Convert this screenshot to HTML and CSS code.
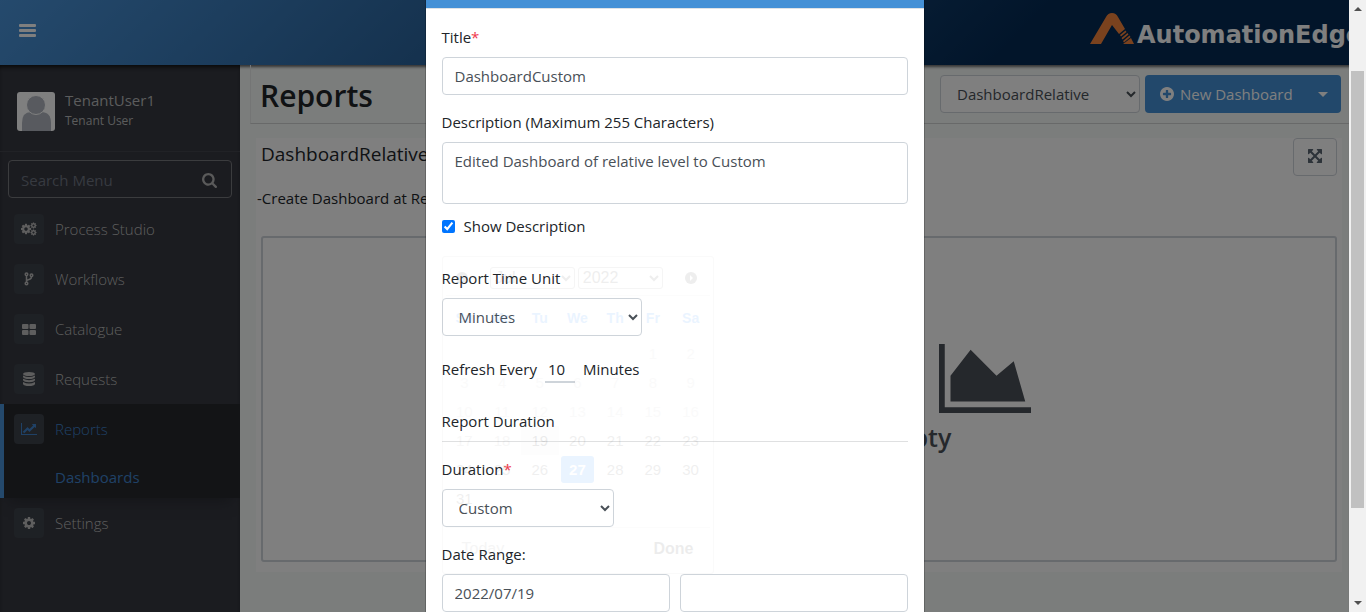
FILE: index.html
```html
<!DOCTYPE html>
<html lang="en">
<head>
<meta charset="utf-8">
<title>Reports - AutomationEdge</title>
<link rel="stylesheet" href="styles.css">
</head>
<body>
<svg width="0" height="0" class="defs" aria-hidden="true">
  <symbol id="cog" viewBox="0 0 1792 1792"><path d="M1152 896q0-106-75-181t-181-75-181 75-75 181 75 181 181 75 181-75 75-181zm512-109v222q0 12-8 23t-20 13l-185 28q-19 54-39 91 35 50 107 138 10 12 10 25t-9 23q-27 37-99 108t-94 71q-12 0-26-9l-138-108q-44 23-91 38-16 136-29 186-7 28-36 28h-222q-14 0-24.500-8.500t-11.500-21.500l-28-184q-49-16-90-37l-141 107q-10 9-25 9-14 0-25-11-126-114-165-168-7-10-7-23 0-12 8-23 15-21 51-66.500t54-70.500q-27-50-41-99l-183-27q-13-2-21-12.500t-8-23.500v-222q0-12 8-23t19-13l186-28q14-46 39-92-40-57-107-138-10-12-10-24 0-10 9-23 26-36 98.500-107.500t94.500-71.500q13 0 26 10l138 107q44-23 91-38 16-136 29-186 7-28 36-28h222q14 0 24.500 8.500t11.500 21.500l28 184q49 16 90 37l142-107q9-9 24-9 13 0 25 10 129 119 165 170 7 8 7 22 0 12-8 23-15 21-51 66.500t-54 70.500q26 50 41 98l183 28q13 2 21 12.500t8 23.500z"/></symbol>
  <symbol id="area" viewBox="0 128 2048 1536"><path d="M2048 1536v128h-2048v-1536h128v1408h1920zM1664 512l256 896h-1664v-576l448-576 576 576z"/></symbol>
</svg>

<div class="window">
  <div class="app">
    <header class="topbar">
      <button class="burger" aria-label="Toggle menu"><svg width="17" height="14" viewBox="0 0 17 14"><path d="M1 0h15q1 0 1 1v1q0 1-1 1H1Q0 3 0 2V1Q0 0 1 0zM1 5h15q1 0 1 1v1q0 1-1 1H1Q0 8 0 7V6Q0 5 1 5zM1 10h15q1 0 1 1v1q0 1-1 1H1q-1 0-1-1v-1q0-1 1-1z"/></svg></button>
      <a class="logo" href="#">
        <svg width="44" height="31" viewBox="0 0 44 31"><path d="M0 31 16 4Q18 0 22 0T28 4L35 16 29 21 22 12 11 31z"/><path d="M30 22l5.500-4.500 1 1.500-5.500 4.500zM31.500 25l6-5 1 1.500-6 5zM33 28l6.500-5.500 1 1.500-6.500 5.500zM33 31l8-6 3 6z"/></svg>
        <span>AutomationEdge</span>
      </a>
    </header>
    <div class="body">
      <aside class="sidebar">
        <div class="user">
          <svg class="avatar" width="38" height="39" viewBox="0 0 38 39"><rect width="38" height="39" rx="3" fill="#fff"/><path d="M5 39V31Q5 20 14 20H24Q34 20 34 31V39z" fill="#b0b5be"/><circle cx="19" cy="13" r="9.500" fill="#b0b5be" stroke="#fff"/></svg>
          <div><div class="user-name">TenantUser1</div><div class="user-role">Tenant User</div></div>
        </div>
        <div class="search">
          <input type="text" placeholder="Search Menu" aria-label="Search Menu">
          <svg width="15" height="15" viewBox="64 128 1664 1664"><path d="M1216 832q0-185-131.500-316.500t-316.500-131.500-316.500 131.500-131.500 316.500 131.500 316.500 316.500 131.500 316.500-131.500 131.500-316.500zm512 832q0 52-38 90t-90 38q-54 0-90-38l-343-342q-179 124-399 124-143 0-273.500-55.500t-225-150-150-225-55.500-273.500 55.500-273.500 150-225 225-150 273.500-55.500 273.500 55.500 225 150 150 225 55.500 273.500q0 220-124 399l343 343q37 37 37 90z"/></svg>
        </div>
        <nav>
          <a class="item" href="#"><i><svg width="16" height="14" viewBox="0 0 16 14"><use href="#cog" x="-1" y="1" width="12" height="12"/><use href="#cog" x="9" y="0" width="7" height="7"/><use href="#cog" x="9" y="7" width="7" height="7"/></svg></i>Process Studio</a>
          <a class="item" href="#"><i><svg width="10" height="14" viewBox="0 0 10 14" class="line"><circle cx="2.500" cy="2.300" r="1.300"/><circle cx="2.500" cy="11.500" r="1.300"/><circle cx="7.500" cy="3.300" r="1.300"/><path d="M2.500 3.500v7M7.500 4.500Q7.500 7 5 7.500T2.500 9.500"/></svg></i>Workflows</a>
          <a class="item" href="#"><i><svg width="14" height="11" viewBox="0 0 14 11"><rect width="6.500" height="5" rx="1"/><rect x="7.500" width="6.500" height="5" rx="1"/><rect y="6" width="6.500" height="5" rx="1"/><rect x="7.500" y="6" width="6.500" height="5" rx="1"/></svg></i>Catalogue</a>
          <a class="item" href="#"><i><svg width="12" height="14" viewBox="0 0 12 14"><ellipse cx="6" cy="2" rx="6" ry="2"/><path d="M0 3.500Q6 6.500 12 3.500V5Q11 7 6 7T0 5zM0 6.800Q6 9.500 12 6.800V8.300Q11 10.200 6 10.200T0 8.300zM0 10Q6 13 12 10V12Q11 14 6 14T0 12z"/></svg></i>Requests</a>
          <div class="group">
            <a class="item" href="#"><i><svg width="16" height="12" viewBox="0 128 2048 1536"><path d="M2048 1536v128h-2048v-1536h128v1408h1920zM1920 288v435q0 21-19.500 29.500t-35.500-7.500l-121-121-633 633q-10 10-23 10t-23-10l-233-233-416 416-192-192 585-585q10-10 23-10t23 10l233 233 464-464-121-121q-16-16-7.500-35.500t29.500-19.500h435q14 0 23 9t9 23z"/></svg></i>Reports</a>
            <a class="subitem" href="#">Dashboards</a>
          </div>
          <a class="item" href="#"><i><svg width="14" height="14"><use href="#cog" width="14" height="14"/></svg></i>Settings</a>
        </nav>
      </aside>
      <main>
        <div class="pagehead">
          <h1>Reports</h1>
          <select class="control dash" aria-label="Dashboard"><option>DashboardRelative</option></select>
          <button class="new"><svg width="14" height="14" viewBox="128 128 1536 1536"><path d="M1344 960v-128q0-26-19-45t-45-19h-256v-256q0-26-19-45t-45-19h-128q-26 0-45 19t-19 45v256h-256q-26 0-45 19t-19 45v128q0 26 19 45t45 19h256v256q0 26 19 45t45 19h128q26 0 45-19t19-45v-256h256q26 0 45-19t19-45zm320-64q0 209-103 385.500t-279.500 279.500-385.500 103-385.500-103-279.500-279.500-103-385.500 103-385.500 279.500-279.500 385.500-103 385.500 103 279.500 279.500 103 385.500z"/></svg><span>New Dashboard</span><b class="caret"></b></button>
        </div>
        <section class="card">
          <div class="cardhead">
            <h2>DashboardRelative</h2>
            <button class="expand" aria-label="Full screen"><svg width="14" height="14" viewBox="128 128 1536 1536"><path d="M1411 541l-355 355 355 355 144-144q29-31 70-14 39 17 39 59v448q0 26-19 45t-45 19h-448q-42 0-59-40-17-39 14-69l144-144-355-355-355 355 144 144q31 30 14 69-17 40-59 40h-448q-26 0-45-19t-19-45v-448q0-42 40-59 39-17 69 14l144 144 355-355-355-355-144 144q-19 19-45 19-12 0-24-5-40-17-40-59v-448q0-26 19-45t45-19h448q42 0 59 40 17 39-14 69l-144 144 355 355 355-355-144-144q-31-30-14-69 17-40 59-40h448q26 0 45 19t19 45v448q0 42-39 59-13 5-25 5-26 0-45-19z"/></svg></button>
          </div>
          <p class="desc">-Create Dashboard at Relative level</p>
          <div class="empty">
            <div class="charts">
              <svg width="92" height="69"><use href="#area" width="92" height="69"/></svg>
              <svg width="92" height="69"><use href="#area" width="92" height="69"/></svg>
              <svg width="92" height="69"><use href="#area" width="92" height="69"/></svg>
            </div>
            <h3>Your Dashboard is Empty</h3>
          </div>
        </section>
      </main>
    </div>
    <div class="backdrop">
      <form class="modal">
        <div class="modalhead"></div>
        <div class="modalbody">
          <div class="field"><label for="title">Title<em>*</em></label><input class="control" id="title" type="text" value="DashboardCustom"></div>
          <div class="field tight"><label for="desc">Description (Maximum 255 Characters)</label><textarea class="control" id="desc">Edited Dashboard of relative level to Custom</textarea></div>
          <div class="check"><input type="checkbox" id="show" checked><label for="show">Show Description</label></div>
          <div class="field unit"><label for="unit">Report Time Unit</label><select class="control" id="unit"><option>Minutes</option></select></div>
          <div class="refresh"><label for="every">Refresh Every</label><input id="every" type="text" value="10"><span>Minutes</span></div>
          <div class="legend">Report Duration</div>
          <div class="field duration"><label for="dur">Duration<em>*</em></label><select class="control" id="dur"><option>Custom</option></select></div>
          <div class="range">
            <label for="from">Date Range:</label>
            <div class="dates">
              <div class="datebox">
                <input class="control" id="from" type="text" value="2022/07/19">
                <div class="calendar">
                  <div class="calhead"><button type="button" class="round" aria-label="Previous"><svg width="12" height="12"><circle cx="6" cy="6" r="6"/><path d="M7 3v6L4 6z" fill="#fff"/></svg></button>
                    <select aria-label="Month"><option>Jul</option></select><select aria-label="Year"><option>2022</option></select>
                    <button type="button" class="round" aria-label="Next"><svg width="12" height="12"><circle cx="6" cy="6" r="6"/><path d="M5 3v6l3-3z" fill="#fff"/></svg></button></div>
                  <table>
                    <thead><tr><th>Su</th><th>Mo</th><th>Tu</th><th>We</th><th>Th</th><th>Fr</th><th>Sa</th></tr></thead>
                    <tbody>
                      <tr class="off"><td></td><td></td><td></td><td></td><td></td><td>1</td><td>2</td></tr>
                      <tr class="off"><td>3</td><td>4</td><td>5</td><td>6</td><td>7</td><td>8</td><td>9</td></tr>
                      <tr class="off"><td>10</td><td>11</td><td>12</td><td>13</td><td>14</td><td>15</td><td>16</td></tr>
                      <tr><td class="dim">17</td><td class="dim">18</td><td class="start">19</td><td>20</td><td>21</td><td>22</td><td>23</td></tr>
                      <tr><td>24</td><td>25</td><td>26</td><td class="today"><span>27</span></td><td>28</td><td>29</td><td>30</td></tr>
                      <tr><td>31</td><td></td><td></td><td></td><td></td><td></td><td></td></tr>
                    </tbody>
                  </table>
                  <div class="calfoot"><button type="button">Today</button><button type="button" class="done">Done</button></div>
                </div>
              </div>
              <input class="control" type="text" aria-label="To date">
            </div>
          </div>
        </div>
      </form>
    </div>
  </div>
  <div class="scrollbar" aria-hidden="true"><span class="up"></span><span class="thumb"></span><span class="down"></span></div>
</div>
</body>
</html>
```

FILE: styles.css
```css
* { box-sizing: border-box; }
body { margin: 0; font-family: "Open Sans", "Noto Sans", sans-serif; font-size: 15px; line-height: 24px; color: #212529; overflow: hidden; }
button, input, select, textarea { font: inherit; }
button { border: 0; padding: 0; background: none; }
a { text-decoration: none; color: inherit; }
svg { fill: currentColor; flex: none; }
h1, h2, h3, p { margin: 0; }
.defs { position: absolute; }
.window { display: flex; height: 100vh; }
.app { position: relative; flex: 1; min-width: 0; display: flex; flex-direction: column; overflow: hidden; }

.topbar { flex: none; height: 65px; padding: 0 0 4px 19px; display: flex; align-items: center; justify-content: space-between; overflow: hidden; background: linear-gradient(135deg, #4a94da 0%, #042a54 75%); color: #fff; }
.burger { color: #fff; display: flex; }
.logo { width: 259px; flex: none; display: flex; align-items: center; gap: 3px; color: #fff; white-space: nowrap; }
.logo svg { color: #f5843c; margin-bottom: 4px; }
.logo span { font-family: "DejaVu Sans", sans-serif; font-weight: bold; font-size: 24px; margin-top: 8px; }

.body { flex: 1; display: flex; min-height: 0; box-shadow: inset 0 4px 3px -2px #666; background: #f6faf8; }
.sidebar { width: 240px; flex: none; overflow: hidden; background: #363840; color: #b4b4b4; box-shadow: inset 0 4px 4px -2px #111; }
.user { height: 87px; padding: 6px 17px 0; display: flex; align-items: center; gap: 10px; border-bottom: 1px solid #42444c; }
.user-name { line-height: 20px; color: #b8b8ba; }
.user-role { font-size: 12px; line-height: 22px; color: #b8b8ba; }
.search { margin: 8px 8px 6px; height: 38px; padding: 2px 14px 0 12px; display: flex; align-items: center; border: 1px solid #77787c; border-radius: 4px; color: #b4b4b4; }
.search input { flex: 1; min-width: 0; border: 0; padding: 0; background: transparent; color: #fff; outline: 0; }
.search input::placeholder { color: #6e7580; }
nav { font-weight: 300; }
.item { height: 50px; padding: 0 14px; display: flex; align-items: center; gap: 11px; color: #bcbcbc; }
.item i { width: 30px; height: 30px; border-radius: 4px; background: #3d424a; display: flex; align-items: center; justify-content: center; }
.line { fill: none; stroke: currentColor; stroke-width: 1.500; }
.group { height: 94px; border-left: 4px solid #4892d8; background: #26282c; box-shadow: 0 12px 12px -8px #2a2c32; }
.group .item { padding-left: 10px; color: #3f83cc; }
.subitem { display: block; padding: 11px 0 0 51px; color: #3f83cc; font-weight: 400; }

main { flex: 1; min-width: 0; padding-left: 10px; }
.pagehead { height: 59px; display: flex; align-items: center; gap: 5px; padding: 0 8px 0 9px; border-bottom: 1px solid #d0d3d2; border-left: 1px solid #e8ebea; }
h1 { flex: 1; font-size: 30px; line-height: 40px; padding-top: 4px; font-weight: 600; }
.control { width: 100%; height: 38px; padding: 6px 12px; border: 1px solid #ced4da; border-radius: 4px; background: #fff; color: #495057; display: block; }
.dash { width: 200px; }
.new { width: 196px; height: 38px; padding: 0 13px 0 15px; display: flex; align-items: center; gap: 6px; border-radius: 4px; background: #4490d6; color: #fff; }
.new span { flex: 1; text-align: left; white-space: nowrap; }
.caret { border: 5px solid transparent; border-top-color: #fff; border-bottom: 0; }
.card { margin: 14px 7px 0 6px; padding: 0 5px 10px; background: #fff; }
.cardhead { display: flex; justify-content: space-between; }
h2 { font-size: 19px; line-height: 32px; font-weight: 400; }
.expand { width: 44px; height: 38px; border: 1px solid #ced4da; border-radius: 4px; color: #5a6672; }
.desc { margin: 10px -4px 26px; }
.empty { height: 326px; border: 2px solid #ced4da; border-radius: 3px; padding-top: 106px; }
.charts { display: flex; justify-content: center; gap: 94px; color: #4b5058; }
h3 { text-align: center; font-size: 25px; line-height: 32px; margin-top: 8px; font-weight: 600; color: #4b5058; }

.backdrop { position: absolute; inset: 0; background: rgba(0, 0, 0, .5); display: flex; justify-content: center; }
.modal { width: 500px; border: solid rgba(0, 0, 0, .2); border-width: 0 1px; background: #fff; background-clip: padding-box; }
.modalhead { height: 9px; background: #4490d6; border-bottom: 1px solid #dee2e6; }
.modalbody { padding: 16px; }
label { display: inline-block; }
.field { margin-bottom: 15px; }
.field label, .range label { display: block; margin-bottom: 8px; }
.tight { margin-bottom: 10px; }
em { color: #f0384c; font-style: normal; }
textarea.control { height: 62px; resize: none; }
.check { display: flex; align-items: center; gap: 9px; margin-bottom: 28px; }
.check input { width: 13px; height: 13px; margin: 0; accent-color: #0075ff; }
.unit { margin-bottom: 21px; }
.unit .control { width: 200px; }
.refresh { display: flex; align-items: flex-start; gap: 8px; margin-bottom: 26px; }
.refresh input { width: 30px; height: 26px; padding: 0 3px; border: 0; border-bottom: 2px solid #ced4da; color: #212529; background: none; }
.legend { padding-bottom: 8px; border-bottom: 1px solid #dfe0e1; margin-bottom: 15px; }
.duration .control { width: 172px; }
.dates { display: grid; grid-template-columns: 1fr 1fr; gap: 10px; }
.datebox { position: relative; }

.calendar { position: absolute; left: 0; bottom: 100%; width: 272px; height: 318px; padding: 3px; border: 1px solid #c5c5c5; border-radius: 3px; opacity: .08; font: 15px "Liberation Sans", Arial, sans-serif; color: #454545; pointer-events: none; }
.calhead { height: 36px; padding: 0 12px 0 10px; display: flex; align-items: center; justify-content: space-between; gap: 1px; border-bottom: 1px solid #ddd; }
.calhead select { width: 85px; height: 22px; border: 1px solid #888; border-radius: 3px; background: none; color: #333; font-size: 16px; }
.round { display: flex; color: #333; }
.calhead .round:first-child { margin-right: 20px; }
.calhead .round:last-child { margin-left: 20px; }
.calendar table { width: 100%; border-collapse: collapse; table-layout: fixed; }
th { height: 43px; padding: 0; color: #007bff; font-size: 14px; }
td { height: 29px; padding: 0; text-align: center; }
.off { opacity: .3; }
.dim { opacity: .5; }
.start { background: #eee; color: #000; }
.today span { display: block; margin: 0 2px; border-radius: 3px; background: #007bff; color: #fff; font-weight: bold; line-height: 27px; }
.calfoot { margin-top: 14px; padding: 12px 16px 0; border-top: 1px solid #ddd; display: flex; justify-content: space-between; }
.calfoot button { color: #888; font-size: 16px; }
.calfoot .done { color: #222; font-weight: bold; }

.scrollbar { width: 17px; flex: none; background: #f1f1f1; display: flex; flex-direction: column; align-items: center; padding: 7px 0; }
.scrollbar span { flex: none; }
.up { border: 4px solid transparent; border-top: 0; border-bottom-color: #505050; }
.thumb { width: 13px; height: 73%; margin-top: 60px; background: #c1c1c1; }
.down { margin-top: auto; border: 4px solid transparent; border-bottom: 0; border-top-color: #505050; }
```
